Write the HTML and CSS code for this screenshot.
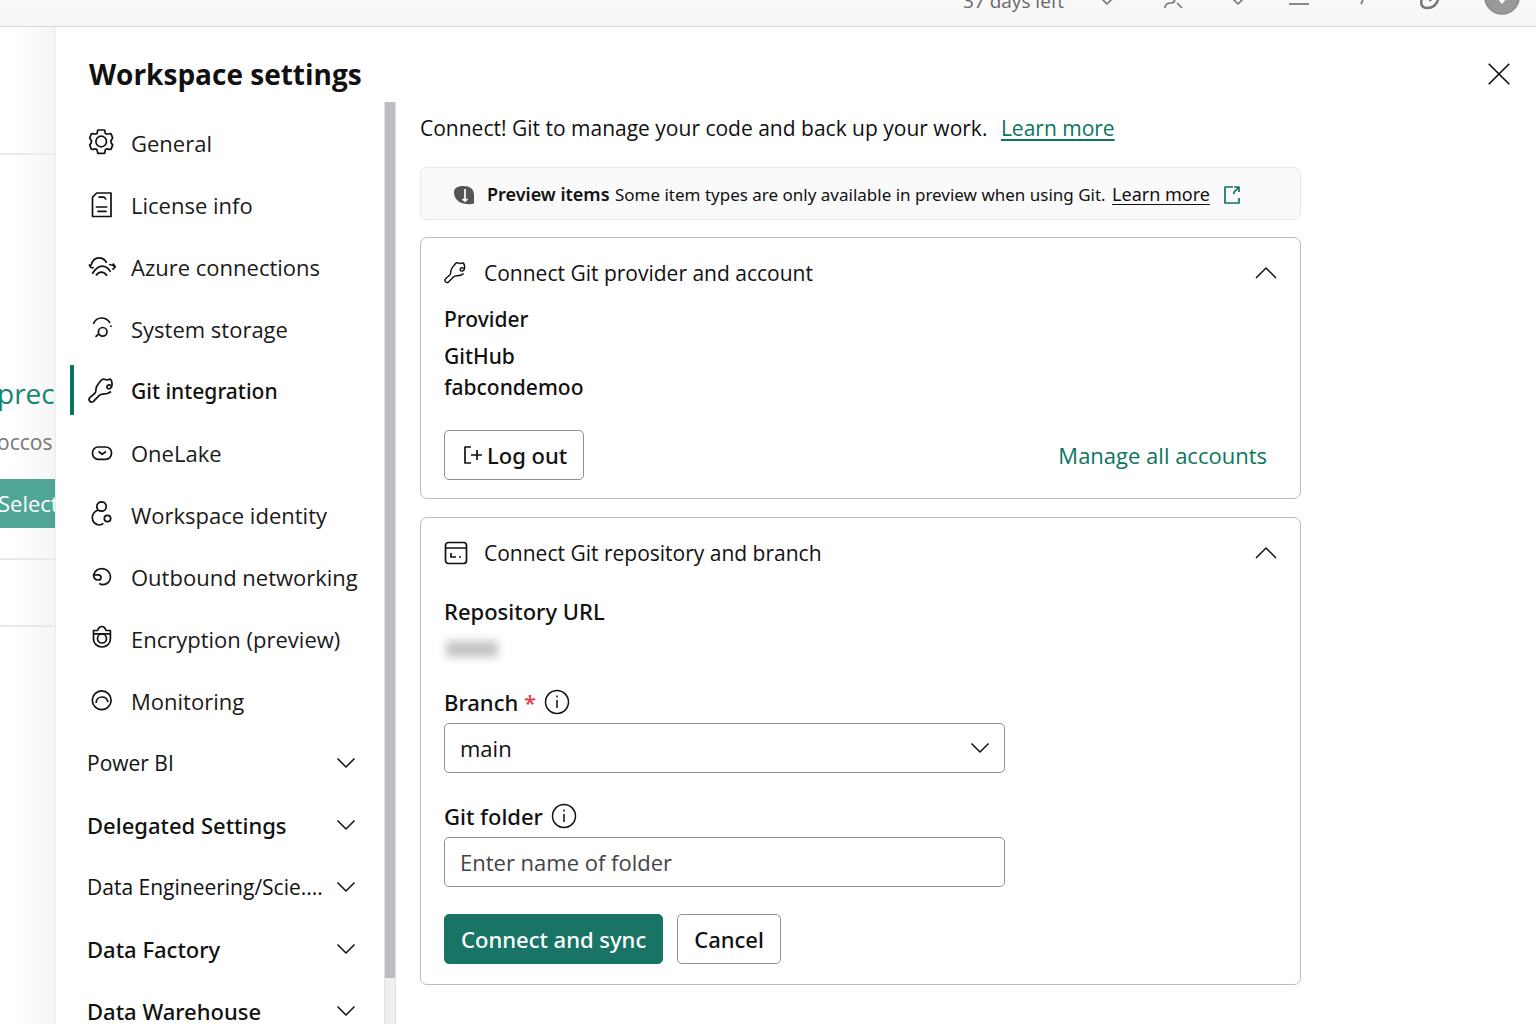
FILE: index.html
```html
<!DOCTYPE html>
<html lang="en">
<head>
<meta charset="utf-8">
<meta name="viewport" content="width=device-width, initial-scale=1">
<title>Workspace settings</title>
<link rel="stylesheet" href="styles.css">
</head>
<body>
<svg class="defs" aria-hidden="true">
  <symbol id="wrench" viewBox="0 0 28 28"><path d="M23 14.500c-1.500 1.300-4.500 2.800-8 2.700-2 0-3 .5-4 1.500l-5.500 5.600c-1.300 1-3 .8-3.800-.2-1-1.200-.6-2.700.4-3.700l5-4.400c1-1.200.7-3 1-4.700.3-2 1.300-3.300 2.700-5l2.400-3c1-1.300 2.500-1.500 4.200-.8l1.300.5 3.700-.8c1.500 1.500 1.800 4.500 1.500 6.800-.5 2-2.500 3.300-4 2.600-1.400-.8-1.300-3 .2-3.500 1-.4 2 0 2.700.8"/></symbol>
  <symbol id="down" viewBox="0 0 20 20"><path d="M1.500 5.500 10 14l8.500-8.500"/></symbol>
  <symbol id="up" viewBox="0 0 22 20"><path d="M1 15 11 5l10 10"/></symbol>
  <symbol id="info" viewBox="0 0 26 26"><circle cx="13" cy="13" r="11.500"/><path d="M13 11v8M13 6.500v2"/></symbol>
</svg>

<header class="topbar">
  <div class="tools">
    <span class="trial">37 days left</span>
    <svg class="tool" viewBox="0 0 66 54"><path d="m28 26 6 6 6-6"/></svg>
    <svg class="tool" viewBox="0 0 66 54"><path d="M26 36c0-3 2-5 6-5 3 0 4-2 4-5M38 31l5 5"/></svg>
    <svg class="tool" viewBox="0 0 66 54"><path d="m27 26 6 6 6-6"/></svg>
    <svg class="tool" viewBox="0 0 66 54"><path d="M18 32h20"/></svg>
    <svg class="tool" viewBox="0 0 66 54"><path d="m26 28-2 4"/></svg>
    <svg class="tool thick" viewBox="0 0 66 54"><path d="M19 27c-2 5 0 9 5 9 7 0 11-4 12-13M25 25l3 4"/></svg>
    <svg class="tool" viewBox="0 0 66 54"><circle class="avatar" cx="33" cy="25" r="17"/><path class="mark" d="m28 26 5 6 5-6z"/></svg>
  </div>
</header>

<div class="stage">
  <div class="backdrop" aria-hidden="true">
    <div class="back-head"></div>
    <div class="back-card">
      <div class="back-title">prec</div>
      <div class="back-sub">occos</div>
      <div class="back-select">Select</div>
    </div>
    <div class="back-row"></div>
  </div>

  <section class="panel" aria-labelledby="panel-title">
    <div class="panel-head">
      <h1 id="panel-title">Workspace settings</h1>
      <button class="close" type="button" aria-label="Close"><svg viewBox="0 0 24 24"><path d="m2.500 2.500 19 19M21.500 2.500l-19 19"/></svg></button>
    </div>

    <div class="panel-body">
      <nav class="nav" aria-label="Settings">
        <a class="item" href="#"><svg viewBox="0 0 28 28"><path d="M9.800 1h6.800l.7 3.400c1.400 1.200 2.600 1 3.900.2l1.900.3 1.600 4.200c-2.400 2.300-2.400 4.600 0 6.800l-1.600 4.200-1.900.4c-1.400-.8-2.600-.9-3.900.3l-.7 3.600H9.800l-.7-3.600c-1.300-1.200-2.500-1.100-3.900-.3l-1.900-.4-1.600-4.200c2.400-2.200 2.400-4.500 0-6.800l1.600-4.200 1.900-.3c1.300.8 2.500 1 3.900-.2z"/><circle cx="13.200" cy="12.500" r="5.300"/></svg>General</a>
        <a class="item" href="#"><svg viewBox="0 0 28 28"><path d="M8.700 2H23v23.500H4.500V6.200zM10.500 6.200h5.700l2 2.300M7.700 16h11.600M9.300 20.300h9.400"/></svg>License info</a>
        <a class="item" href="#"><svg viewBox="0 0 28 28"><path d="M3 12.500c1.200-4.500 4.300-7.700 8-7.700s6.200 2.200 7.700 5M1 11.500l1.800 2.800 3 .7M4.300 20.700c3-4.500 6-7.500 9.700-7.500 3.800 0 6.700 2.500 8.500 5.700M8 22.500c1.500-2.200 3.300-3.300 5.300-3.300 2.300 0 4.200 1.300 5.700 3.500M21 11.500c2.500 0 4.500.8 6 2.300M25 10.500l2.300 3.500-2.800 2.700"/></svg>Azure connections</a>
        <a class="item" href="#"><svg viewBox="0 0 28 28"><path d="M5.300 8.800c1.700-3.600 4.600-5.800 8.200-5.800 3.700 0 6.700 2 8.500 5M23 10.500v1.500M7.500 21.800l3.200-3"/><circle cx="14.700" cy="16.800" r="4.300"/></svg>System storage</a>
        <a class="item active" href="#" aria-current="page"><svg><use href="#wrench"/></svg>Git integration</a>
        <a class="item" href="#"><svg viewBox="0 0 28 28"><rect x="4.500" y="8" width="19" height="12.300" rx="5.800"/><path d="m10.500 12.500 3.700 2.800 3.800-2.800"/></svg>OneLake</a>
        <a class="item" href="#"><svg viewBox="0 0 28 28"><circle cx="13.500" cy="5.500" r="4.700"/><path d="M10 9c-3.500 1.500-5.700 4.200-5.700 7.700 0 4.300 3.200 7.300 7 7.300 1.700 0 3-.6 4-1.700"/><circle cx="19.500" cy="17.500" r="3.200"/></svg>Workspace identity</a>
        <a class="item" href="#"><svg viewBox="0 0 28 28"><path d="M5.700 11.500c1.500-3.700 4.600-5.800 8.300-5.800 4.700 0 8.500 3.500 8.500 8 0 4.600-3.200 8-7.700 8-1.500 0-2.600-.5-3.500-1.400M5.500 11.800h4.700c2 0 2.800 1.500 2.800 2.700s-1 2.500-2.800 2.500c-2.900 0-4.700-2-4.700-5.200z"/></svg>Outbound networking</a>
        <a class="item" href="#"><svg viewBox="0 0 28 28"><path d="M5.500 5.500h3.800c.8-.3.700-1.200 1.200-2 .7-1.400 2-2 3.300-2 1.500 0 2.700.7 3.400 2 .4.900.3 1.700 1.200 2h4V14c0 4.500-3.500 8-8.400 8s-8.500-3.500-8.500-8zM5.500 8.800h17"/><circle cx="14" cy="13.500" r="4.500"/></svg>Encryption (preview)</a>
        <a class="item" href="#"><svg viewBox="0 0 28 28"><circle cx="13.700" cy="13.200" r="9.400"/><path d="M8 16c.3-3.500 2.800-6 6-6 3 0 5.300 2 6 5"/></svg>Monitoring</a>
        <button class="group" type="button">Power BI<svg><use href="#down"/></svg></button>
        <button class="group strong" type="button">Delegated Settings<svg><use href="#down"/></svg></button>
        <button class="group" type="button">Data Engineering/Scie....<svg><use href="#down"/></svg></button>
        <button class="group strong" type="button">Data Factory<svg><use href="#down"/></svg></button>
        <button class="group strong" type="button">Data Warehouse<svg><use href="#down"/></svg></button>
      </nav>
      <div class="scroll" aria-hidden="true"><div class="thumb"></div></div>

      <main class="content">
        <p class="intro">Connect! Git to manage your code and back up your work. <a href="#">Learn more</a></p>

        <div class="notice">
          <svg class="alert" viewBox="0 0 20 20"><path class="blob" d="M0 7c0-4 4-6 9-6 7 0 11 3 11 9v8.500c-3 .8-6 1-9 .3C4 18 0 13 0 7z"/><path class="bang" d="M11 4v12M8.500 14l2.500 2 2.500-2"/></svg>
          <span><b>Preview items</b> Some item types are only available in preview when using Git. <a href="#">Learn more</a></span>
          <svg class="open" viewBox="0 0 18 20"><path d="M10 2H2v16h14v-5M11 9V7l5-5M11 2h5v5"/></svg>
        </div>

        <section class="card">
          <button class="card-head" type="button"><svg class="lead"><use href="#wrench"/></svg><span>Connect Git provider and account</span><svg class="chev"><use href="#up"/></svg></button>
          <div class="provider">
            <h2>Provider</h2>
            <p>GitHub</p>
            <p>fabcondemoo</p>
          </div>
          <div class="account">
            <button class="btn logout" type="button"><svg viewBox="0 0 20 20"><path d="M8 2H2v16h6M8 10h11M14 5v10"/></svg>Log out</button>
            <a class="manage" href="#">Manage all accounts</a>
          </div>
        </section>

        <section class="card">
          <button class="card-head" type="button"><svg class="lead" viewBox="0 0 24 24"><rect x="1.500" y="1.500" width="21" height="21" rx="3"/><path d="M1.500 7h21M7 12v4h5M15 16h2"/></svg><span>Connect Git repository and branch</span><svg class="chev"><use href="#up"/></svg></button>
          <h2 class="repo">Repository URL</h2>
          <div class="redacted"></div>
          <form class="form">
            <div class="label"><label for="branch">Branch <span class="req">*</span></label><svg><use href="#info"/></svg></div>
            <div class="select"><select id="branch"><option>main</option></select><svg><use href="#down"/></svg></div>
            <div class="label folder"><label for="folder">Git folder</label><svg><use href="#info"/></svg></div>
            <input id="folder" type="text" placeholder="Enter name of folder">
            <div class="actions">
              <button class="btn primary" type="button">Connect and sync</button>
              <button class="btn" type="button">Cancel</button>
            </div>
          </form>
        </section>
      </main>
    </div>
  </section>
</div>
</body>
</html>
```
FILE: styles.css
```css
* { box-sizing: border-box; }
body {
  margin: 0;
  height: 100vh;
  display: flex;
  flex-direction: column;
  overflow: hidden;
  background: #fff;
  color: #111;
  font: 22px/30px "Open Sans", "Noto Sans", sans-serif;
}
h1, h2, p { margin: 0; }
h2 { line-height: 30px; }
button, input, select { font: inherit; color: inherit; }
svg { flex: none; fill: none; stroke: #111; stroke-width: 1.7; stroke-linejoin: round; }
.defs { display: none; }
a { color: #0b7560; }

.topbar {
  flex: none;
  height: 27px;
  overflow: hidden;
  display: flex;
  flex-direction: column;
  justify-content: flex-end;
  background: linear-gradient(#f9f9f9, #f6f6f6);
  border-bottom: 1px solid #d8d8d8;
}
.tools { flex: none; height: 54px; display: flex; justify-content: flex-end; align-items: center; padding-right: 1px; }
.trial { margin-right: 9px; padding-top: 4px; color: #666; font-size: 19px; }
.tool { width: 66px; height: 54px; stroke: #777; }
.thick { stroke-width: 2.5; }
.avatar { fill: #999; stroke: #8c8c8c; }
.mark { fill: #fff; stroke: none; }

.stage { flex: 1; min-height: 0; display: flex; }
.backdrop {
  flex: none;
  width: 56px;
  overflow: hidden;
  background: linear-gradient(90deg, #fff 20%, #f5f5f5);
  border-right: 1px solid #ececec;
  white-space: nowrap;
}
.back-head { height: 128px; border-bottom: 2px solid #ebebeb; }
.back-card { height: 405px; padding-top: 217px; border-bottom: 2px solid #e8e8e8; }
.back-row { height: 67px; border-bottom: 2px solid #e8e8e8; }
.back-title { margin-left: -3px; font-size: 28px; line-height: 42px; color: #178571; }
.back-sub { margin: 13px 0 22px -3px; font-size: 21px; color: #777; }
.back-select { height: 49px; margin-left: -2px; line-height: 48px; color: #fff; background: #50a696; }

.panel { flex: 1; min-width: 0; display: flex; flex-direction: column; background: #fff; }
.panel-head { flex: none; height: 75px; padding: 18px 24px 0 33px; display: flex; justify-content: space-between; align-items: center; }
h1 { font-size: 28px; line-height: 40px; font-weight: 700; }
.close { padding: 0; border: 0; background: none; line-height: 0; }
.close svg { width: 26px; height: 26px; stroke-width: 1.5; }
.panel-body { flex: 1; min-height: 0; display: flex; }

.nav { flex: none; width: 328px; padding-top: 10px; overflow: hidden; }
.item { position: relative; height: 62px; padding-left: 32px; display: flex; align-items: center; gap: 15px; color: #1a1a1a; text-decoration: none; white-space: nowrap; }
.item svg { width: 28px; height: 28px; }
.item.active::before { content: ""; position: absolute; left: 14px; top: 5px; width: 4px; height: 50px; background: #0b7560; }
.group { width: 100%; height: 62px; padding: 0 28px 0 31px; border: 0; background: none; display: flex; justify-content: space-between; align-items: center; font-size: 21px; white-space: nowrap; }
.group svg { width: 20px; height: 20px; }
.item.active, .strong, h2, .provider, .btn, .label { font-family: "Noto Sans", "Open Sans", sans-serif; font-size: 22px; font-weight: 500; color: #111; }
.item.active, .provider, .provider h2 { font-size: 21px; }
.scroll { flex: none; width: 12px; display: flex; flex-direction: column; background: #efefef; border: solid #e2e2e4; border-width: 0 1px; }
.thumb { height: 95%; background: #bcbcc2; }

.content { flex: 1; min-width: 0; padding: 12px 24px 40px; }
.intro { margin-bottom: 25px; font-size: 21px; line-height: 28px; }
.intro a { margin-left: 8px; text-underline-offset: 3px; }
.notice, .card { max-width: 881px; border-radius: 7px; }
.notice { height: 53px; padding: 2px 33px 0; display: flex; align-items: center; border: 1px solid #e9e9e9; background: #fafafa; font-family: "Noto Sans", "Open Sans", sans-serif; font-size: 17px; white-space: nowrap; }
.notice a { margin-left: 2px; color: #111; font-size: 18px; text-underline-offset: 3px; }
.notice b { margin-right: 1px; font-size: 18px; font-weight: 600; }
.alert { width: 20px; height: 20px; margin-right: 13px; }
.blob { fill: #555; stroke: none; }
.bang { stroke: #fff; }
.open { width: 18px; height: 20px; margin-left: 13px; stroke: #0b7560; }

.card { margin-top: 17px; padding: 17px 23px 18px; border: 1px solid #b9bbc0; }
.card + .card { margin-top: 18px; padding-bottom: 20px; }
.card-head { width: 100%; height: 36px; padding: 0; border: 0; background: none; display: flex; align-items: center; gap: 16px; font-size: 21px; text-align: left; }
.card-head span { flex: 1; }
.lead { width: 24px; height: 24px; }
.chev { width: 22px; height: 20px; }
.chev, .group svg, .select svg { stroke-width: 1.5; }
.provider { margin: 13px 0 27px; line-height: 31px; }
.provider h2 { margin-bottom: 7px; }
.account { display: flex; justify-content: space-between; align-items: center; padding-right: 10px; }
.btn { height: 50px; padding: 0 16px; border: 1px solid #8f8f8f; border-radius: 5px; background: #fff; white-space: nowrap; }
.logout { display: flex; align-items: center; gap: 4px; padding: 0 16px 0 18px; }
.logout svg { width: 20px; height: 20px; }
.manage { text-decoration: none; }
.repo { margin-top: 25px; }
.redacted { width: 52px; height: 16px; margin: 15px 0 30px 2px; background: #c4c4c4; filter: blur(4px); }
.form { max-width: 561px; }
.label { display: flex; align-items: center; gap: 8px; margin-bottom: 6px; }
.label svg { width: 26px; height: 26px; stroke-width: 1.5; }
.req { color: #e8394a; }
.select { display: grid; align-items: center; }
.select select, .select svg { grid-area: 1 / 1; }
.select svg { width: 20px; height: 20px; margin-right: 15px; justify-self: end; pointer-events: none; }
select, input { width: 100%; height: 50px; padding: 0 15px; border: 1px solid #8f8f8f; border-radius: 5px; background: #fff; appearance: none; }
input::placeholder { color: #444; opacity: 1; }
.folder { margin-top: 28px; }
.actions { display: flex; gap: 14px; margin-top: 27px; }
.btn.primary { color: #fff; background: #187565; border-color: #187565; }
```
